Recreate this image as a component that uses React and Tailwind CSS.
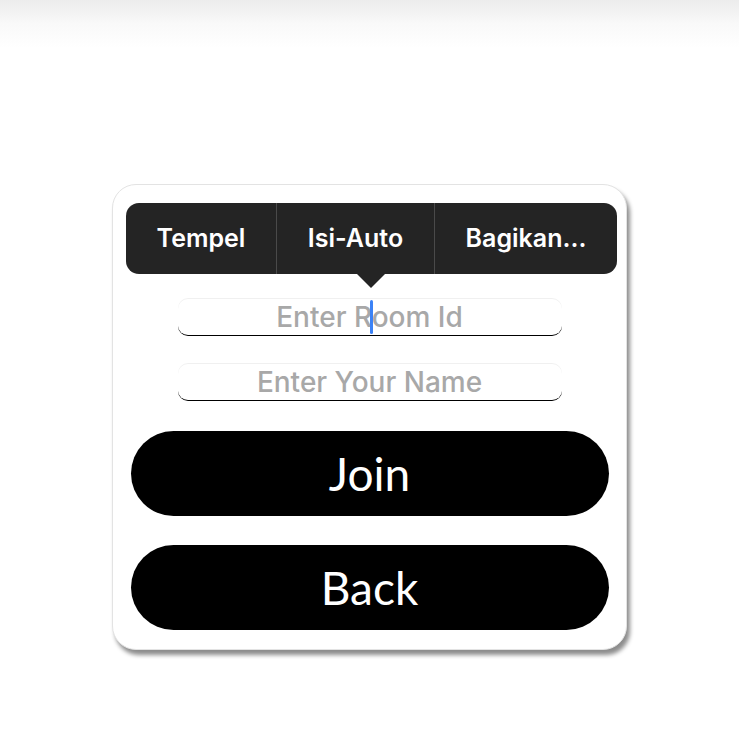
import { useState } from 'react';

const MENU_ITEMS = ['Tempel', 'Isi-Auto', 'Bagikan...'];

function Field({ placeholder, caret }) {
  return (
    <div className="relative w-[384px] h-[38px] rounded-[10px] border-b-[1.5px] border-black shadow-[inset_0_1px_0_rgba(0,0,0,0.06)] flex items-center justify-center">
      <input
        placeholder={placeholder}
        className="w-full h-full bg-transparent text-center text-[28px] outline-none placeholder:text-[#a8a8a8] font-['Inter',sans-serif] font-medium"
      />
      {caret && <span className="absolute left-[192px] top-[2px] w-[3px] h-[34px] bg-[#3b82f6] rounded-full" />}
    </div>
  );
}

export default function App() {
  const [room, setRoom] = useState('');

  return (
    <div className="min-h-[731px] bg-white flex flex-col items-center">
      {/* top shade */}
      <div className="w-full h-[48px] bg-gradient-to-b from-[#ececec] via-[#f9f9f9] to-white" />

      {/* Card */}
      <div className="relative mt-[136px] w-[515px] h-[466px] bg-white rounded-[24px] border border-[#e3e3e3] shadow-[3px_5px_4px_rgba(0,0,0,0.45)] flex flex-col items-center pt-[113px]">
        {/* Callout menu */}
        <div className="absolute left-[13px] top-[18px] w-[491px]">
          <div className="h-[71px] bg-[#242424] rounded-[13px] flex items-center text-white font-['Inter',sans-serif] font-semibold text-[25px]">
            {MENU_ITEMS.map((m, i) => (
              <div
                key={m}
                className={`h-full flex items-center justify-center ${i === 0 ? 'w-[150px]' : i === 1 ? 'w-[159px] border-x border-[#4a4a4a]' : 'flex-1'}`}
              >
                {m}
              </div>
            ))}
          </div>
          <div className="ml-[231px] w-0 h-0 border-x-[14px] border-x-transparent border-t-[14px] border-t-[#242424]" />
        </div>

        <Field placeholder="Enter Room Id" caret />
        <div className="h-[27px]" />
        <Field placeholder="Enter Your Name" />

        <div className="mt-[30px] flex flex-col gap-[29px] w-[478px]">
          <button className="h-[85px] rounded-full bg-black text-white text-[46px] font-['Lato',sans-serif]">
            Join
          </button>
          <button className="h-[85px] rounded-full bg-black text-white text-[46px] font-['Lato',sans-serif]">
            Back
          </button>
        </div>
      </div>
    </div>
  );
}
